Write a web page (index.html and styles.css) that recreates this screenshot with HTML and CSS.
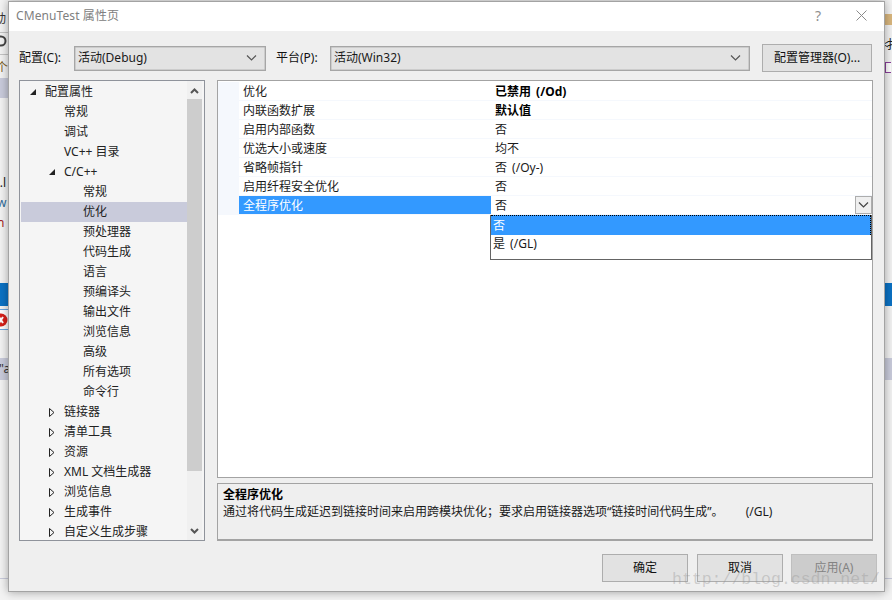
FILE: index.html
```html
<!DOCTYPE html>
<html lang="zh-CN">
<head>
<meta charset="utf-8">
<title>CMenuTest 属性页</title>
<link rel="stylesheet" href="styles.css">
</head>
<body>
<div class="desktop">
  <div class="strip strip-left">
    <div class="sl sl-top"><span class="sl-glyph">动</span></div>
    <div class="sl sl-tool"><svg width="8" height="14" viewBox="0 0 8 14"><circle cx="1" cy="7" r="4.5" fill="none" stroke="#444" stroke-width="2"/></svg></div>
    <div class="sl sl-ge"><span class="sl-glyph2">个</span></div>
    <div class="sl sl-sel"></div>
    <div class="sl sl-code c1">c.l</div>
    <div class="sl sl-code c2">w</div>
    <div class="sl sl-code c3">n</div>
    <div class="sl sl-blue"></div>
    <div class="sl sl-err"><svg width="8" height="20" viewBox="0 0 8 20"><circle cx="1" cy="10" r="6.5" fill="#d6201a"/><path d="M-1 7l4 6M3 7l-4 6" stroke="#fff" stroke-width="2"/></svg></div>
    <div class="sl sl-gray"><span class="sl-quote">"a</span></div>
    <div class="sl sl-foot"></div>
  </div>
  <div class="strip strip-right">
    <div class="sl sr-orange"></div>
    <div class="sl sr-text">&lt;扌</div>
    <div class="sl sr-check"></div>
    <div class="sl sl-blue"></div>
    <div class="sl sl-gray"></div>
    <div class="sl sl-foot"></div>
  </div>

  <div class="dialog">
    <header class="titlebar">
      <span class="title">CMenuTest 属性页</span>
      <span class="help">?</span>
      <svg class="close" width="11" height="11" viewBox="0 0 11 11"><path d="M.5.5l10 10M10.500.5l-10 10" stroke="#8a8a8a" stroke-width="1" fill="none"/></svg>
    </header>

    <div class="toolbar">
      <label class="lbl lbl-config">配置(C):</label>
      <div class="select select-config"><span>活动(Debug)</span>
        <svg class="chev" width="11" height="6" viewBox="0 0 11 6"><path d="M1 .5l4.500 4.500 4.500-4.500" stroke="#555" stroke-width="1.200" fill="none"/></svg>
      </div>
      <label class="lbl lbl-platform">平台(P):</label>
      <div class="select select-platform"><span>活动(Win32)</span>
        <svg class="chev" width="11" height="6" viewBox="0 0 11 6"><path d="M1 .5l4.500 4.500 4.500-4.500" stroke="#555" stroke-width="1.200" fill="none"/></svg>
      </div>
      <button class="btn btn-manager">配置管理器(O)...</button>
    </div>

    <div class="main">
      <nav class="tree">
        <ul class="tree-list">
          <li class="node l0"><span class="twist"><svg width="6" height="6" viewBox="0 0 6 6"><path d="M6 0v6H0z" fill="#222"/></svg></span>配置属性</li>
          <li class="node l1"><span class="twist"></span>常规</li>
          <li class="node l1"><span class="twist"></span>调试</li>
          <li class="node l1"><span class="twist"></span>VC++ 目录</li>
          <li class="node l1"><span class="twist"><svg width="6" height="6" viewBox="0 0 6 6"><path d="M6 0v6H0z" fill="#222"/></svg></span>C/C++</li>
          <li class="node l2"><span class="twist"></span>常规</li>
          <li class="node l2 selected"><span class="twist"></span>优化</li>
          <li class="node l2"><span class="twist"></span>预处理器</li>
          <li class="node l2"><span class="twist"></span>代码生成</li>
          <li class="node l2"><span class="twist"></span>语言</li>
          <li class="node l2"><span class="twist"></span>预编译头</li>
          <li class="node l2"><span class="twist"></span>输出文件</li>
          <li class="node l2"><span class="twist"></span>浏览信息</li>
          <li class="node l2"><span class="twist"></span>高级</li>
          <li class="node l2"><span class="twist"></span>所有选项</li>
          <li class="node l2"><span class="twist"></span>命令行</li>
          <li class="node l1"><span class="twist"><svg width="6" height="9" viewBox="0 0 6 9"><path d="M.5.500l4.500 4-4.500 4z" fill="none" stroke="#222"/></svg></span>链接器</li>
          <li class="node l1"><span class="twist"><svg width="6" height="9" viewBox="0 0 6 9"><path d="M.5.500l4.500 4-4.500 4z" fill="none" stroke="#222"/></svg></span>清单工具</li>
          <li class="node l1"><span class="twist"><svg width="6" height="9" viewBox="0 0 6 9"><path d="M.5.500l4.500 4-4.500 4z" fill="none" stroke="#222"/></svg></span>资源</li>
          <li class="node l1"><span class="twist"><svg width="6" height="9" viewBox="0 0 6 9"><path d="M.5.500l4.500 4-4.500 4z" fill="none" stroke="#222"/></svg></span>XML 文档生成器</li>
          <li class="node l1"><span class="twist"><svg width="6" height="9" viewBox="0 0 6 9"><path d="M.5.500l4.500 4-4.500 4z" fill="none" stroke="#222"/></svg></span>浏览信息</li>
          <li class="node l1"><span class="twist"><svg width="6" height="9" viewBox="0 0 6 9"><path d="M.5.500l4.500 4-4.500 4z" fill="none" stroke="#222"/></svg></span>生成事件</li>
          <li class="node l1"><span class="twist"><svg width="6" height="9" viewBox="0 0 6 9"><path d="M.5.500l4.500 4-4.500 4z" fill="none" stroke="#222"/></svg></span>自定义生成步骤</li>
        </ul>
        <div class="scrollbar">
          <svg class="sb-arrow sb-up" width="9" height="6" viewBox="0 0 9 6"><path d="M1 5l3.500-3.500L8 5" stroke="#555" stroke-width="2" fill="none"/></svg>
          <div class="sb-thumb"></div>
          <svg class="sb-arrow sb-down" width="9" height="6" viewBox="0 0 9 6"><path d="M1 1l3.500 3.500L8 1" stroke="#555" stroke-width="2" fill="none"/></svg>
        </div>
      </nav>

      <div class="right">
        <div class="grid">
          <div class="rows">
            <div class="row"><span class="name">优化</span><span class="value strong">已禁用 (/Od)</span></div>
            <div class="row"><span class="name">内联函数扩展</span><span class="value strong">默认值</span></div>
            <div class="row"><span class="name">启用内部函数</span><span class="value">否</span></div>
            <div class="row"><span class="name">优选大小或速度</span><span class="value">均不</span></div>
            <div class="row"><span class="name">省略帧指针</span><span class="value">否 (/Oy-)</span></div>
            <div class="row"><span class="name">启用纤程安全优化</span><span class="value">否</span></div>
            <div class="row row-active"><span class="name">全程序优化</span><span class="value"><span class="value-text">否</span><span class="combo"><svg width="11" height="6" viewBox="0 0 11 6"><path d="M1 .5l4.500 4.500 4.500-4.500" stroke="#444" stroke-width="1.200" fill="none"/></svg></span></span></div>
          </div>
          <div class="dropdown">
            <div class="opt opt-on">否</div>
            <div class="opt">是 (/GL)</div>
          </div>
        </div>
        <div class="desc">
          <div class="desc-title">全程序优化</div>
          <div class="desc-body">通过将代码生成延迟到链接时间来启用跨模块优化；要求启用链接器选项“链接时间代码生成”。<span class="desc-flag">(/GL)</span></div>
        </div>
      </div>
    </div>

    <footer class="footer">
      <button class="btn btn-foot btn-ok">确定</button>
      <button class="btn btn-foot">取消</button>
      <button class="btn btn-foot btn-off">应用(A)</button>
    </footer>
  </div>

  <div class="watermark">http://blog.csdn.net/</div>
</div>
</body>
</html>
```
FILE: styles.css
```css
* { box-sizing: border-box; }
html, body { margin: 0; padding: 0; }
body {
  width: 892px;
  height: 600px;
  overflow: hidden;
  font-family: "Noto Sans", "Noto Sans CJK SC", sans-serif;
  font-size: 12px;
  line-height: 18px;
  color: #1a1a1a;
  background: #f2f2f2;
}
.desktop { position: relative; width: 892px; height: 600px; overflow: hidden; }

/* background windows peeking out around the dialog */
.strip { position: absolute; top: 0; width: 8px; height: 600px; overflow: hidden; background: #f3f3f3; }
.strip-left { left: 0; }
.strip-right { left: 884px; }
.sl { position: absolute; left: 0; width: 8px; overflow: hidden; white-space: nowrap; }
.sl-top { top: 0; height: 33px; border-bottom: 1px solid #c4c4c4; }
.sl-glyph { position: absolute; left: -6px; top: 10px; color: #333; }
.sl-tool { top: 34px; height: 21px; border-bottom: 1px solid #c4c4c4; }
.sl-ge { top: 56px; height: 22px; }
.sl-glyph2 { position: absolute; left: -4px; top: 3px; color: #7a5a20; }
.sl-sel { top: 78px; height: 20px; background: #c9cbdb; }
.sl-code { height: 18px; color: #222; }
.c1 { top: 174px; left: -6px; width: 14px; }
.c2 { top: 194px; left: -3px; width: 11px; color: #2b6a9a; }
.c3 { top: 214px; left: -3px; width: 11px; color: #a02020; }
.sl-blue { top: 283px; height: 23px; background: #0b72c4; }
.sl-err { top: 309px; height: 21px; border-top: 1px solid #6aa6e0; border-bottom: 1px solid #6aa6e0; background: #fff; }
.sl-gray { top: 358px; height: 22px; background: #c9cbdb; }
.sl-quote { position: absolute; left: -1px; top: 2px; color: #333; }
.sl-foot { top: 578px; height: 1px; background: #c9cbdb; }
.sr-orange { top: 14px; height: 11px; background: #d9b77e; left: 1px; }
.sr-text { top: 36px; left: -2px; width: 10px; color: #222; height: 18px; letter-spacing: -2px; }
.sr-check { top: 62px; left: 1px; width: 6px; height: 11px; border: 1px solid #8a3f9a; border-right: 0; background: #fff; }

/* dialog */
.dialog {
  position: absolute;
  left: 8px;
  top: 1px;
  width: 877px;
  height: 591px;
  display: flex;
  flex-direction: column;
  background: #efefef;
  border: 1px solid #a3a3a3;
  box-shadow: 0 0 9px rgba(0, 0, 0, .35);
}
.titlebar {
  height: 29px;
  flex: none;
  display: flex;
  align-items: center;
  background: #fff;
  padding: 0 17px 2px 7px;
}
.title { flex: 1; color: #808080; letter-spacing: .1px; }
.help { color: #8f8f8f; font-size: 14px; margin-right: 35px; }
.close { flex: none; }

.toolbar {
  flex: none;
  display: flex;
  align-items: center;
  height: 28px;
  margin-top: 13px;
  padding: 0 12px 0 10px;
}
.lbl { flex: none; color: #111; }
.lbl-config { width: 55px; }
.lbl-platform { width: 54px; margin-left: 10px; }
.select {
  flex: none;
  display: flex;
  align-items: center;
  justify-content: space-between;
  height: 25px;
  padding: 0 8px 0 3px;
  background: #e3e3e3;
  border: 1px solid #a6a6a6;
  box-shadow: inset 0 0 0 .5px #b5b5b5;
}
.select-config { width: 192px; }
.select-platform { width: 420px; }
.btn {
  font: inherit;
  color: #111;
  background: #e2e2e2;
  border: 1px solid #adadad;
  padding: 0;
}
.btn-manager { flex: none; width: 110px; height: 28px; margin-left: 12px; }

.main {
  flex: none;
  display: flex;
  gap: 12px;
  height: 461px;
  margin-top: 8px;
  padding: 0 11px 0 10px;
}

/* tree */
.tree {
  flex: none;
  display: flex;
  width: 186px;
  background: #f5f5f5;
  border: 1px solid #8f939b;
  padding-right: 2px;
}
.tree-list {
  flex: 1;
  min-width: 0;
  list-style: none;
  margin: 0;
  padding: 1px 0 0 1px;
  overflow: hidden;
}
.node { display: flex; align-items: center; height: 20px; color: #222; white-space: nowrap; }
.twist { flex: none; display: flex; align-items: center; width: 15px; height: 20px; }
.l0 { padding-left: 9px; }
.l1 { padding-left: 28px; }
.l2 { padding-left: 47px; }
.selected { background: #c9cbdb; }
.scrollbar {
  flex: none;
  width: 15px;
  display: flex;
  flex-direction: column;
  align-items: center;
  background: #f0f0f0;
}
.sb-arrow { flex: none; }
.sb-up { margin: 7px 0 5px; }
.sb-down { margin: 0 0 6px; }
.sb-thumb { flex: none; align-self: stretch; height: 372px; background: #cdcdcd; margin-bottom: auto; }

/* property grid */
.right { flex: 1; min-width: 0; display: flex; flex-direction: column; gap: 5px; }
.grid {
  position: relative;
  height: 398px;
  flex: none;
  background: #fff;
  border: 1px solid #a3a3a3;
}
.rows { padding-top: 1px; }
.row {
  display: grid;
  grid-template-columns: 252px 1fr;
  height: 19px;
  padding-left: 21px;
  background: #f5f8fd;
  border-bottom: 1px solid #f5f8fd;
}
.name, .value {
  display: flex;
  align-items: center;
  height: 18px;
  padding: 1px 0 0 4px;
  background: #fff;
  color: #1a1a1a;
  white-space: pre;
  word-spacing: 2px;
}
.value { justify-content: space-between; }
.strong { font-weight: 700; color: #000; }
.row-active .name { background: #3399ff; color: #fff; }
.row-active .value { padding-top: 0; }
.value-text { padding-top: 1px; }
.combo {
  flex: none;
  display: flex;
  align-items: center;
  justify-content: center;
  width: 17px;
  height: 18px;
  background: #efefef;
  border: 1px solid #adadad;
}
.dropdown {
  position: absolute;
  left: 272px;
  top: 134px;
  width: 382px;
  height: 45px;
  background: #fff;
  border: 1px solid #646464;
  border-top: 0;
}
.opt { height: 19px; padding-left: 2px; line-height: 18px; color: #1a1a1a; word-spacing: 2px; }
.opt-on { height: 20px; line-height: 19px; background: #3399ff; color: #fff; border-top: 1px dotted #000; border-right: 1px dotted #000; }

.desc {
  flex: 1;
  min-height: 0;
  padding: 2px 5px;
  background: #efefef;
  border: 1px solid #a3a3a3;
  border-bottom: 2px solid #a3a3a3;
}
.desc-title { height: 17px; font-weight: 700; color: #000; }
.desc-body { color: #1a1a1a; white-space: nowrap; }
.desc-flag { margin-left: 22px; }

.footer {
  flex: none;
  display: flex;
  justify-content: flex-end;
  gap: 8px;
  padding: 13px 7px 0 0;
}
.btn-foot { width: 86px; height: 28px; }
.btn-ok { margin-right: 1px; }
.btn-off { background: #cccccc; border-color: #bfbfbf; color: #838383; }

.watermark {
  position: absolute;
  left: 672px;
  top: 570px;
  font-family: "Liberation Mono", monospace;
  font-size: 16.500px;
  line-height: 20px;
  color: rgba(150, 150, 150, .38);
  white-space: nowrap;
}
```
